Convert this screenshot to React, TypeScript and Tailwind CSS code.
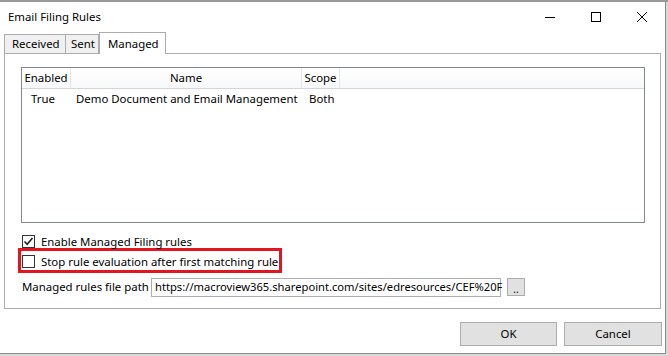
import React from "react";

const FONT = { fontFamily: '"Segoe UI", "Noto Sans", sans-serif' };

function CheckBox({ checked, label }: { checked?: boolean; label: string }) {
  return (
    <div className="flex items-center h-[13px]">
      <div className="shrink-0 w-[13px] h-[13px] border border-[#333333] bg-white flex items-center justify-center">
        {checked && (
          <svg width="11" height="11" viewBox="0 0 11 11">
            <path d="M1.5 5.5 L4.2 8.2 L9.5 2" fill="none" stroke="#222" strokeWidth="1.6" />
          </svg>
        )}
      </div>
      <span className="ml-[6px] leading-none whitespace-nowrap">{label}</span>
    </div>
  );
}

function WinButton({ children, w }: { children: React.ReactNode; w: string }) {
  return (
    <div
      className={`${w} h-[24px] bg-[#e1e1e1] border border-[#adadad] flex items-center justify-center`}
    >
      {children}
    </div>
  );
}

export default function App() {
  return (
    <div className="w-[668px] h-[356px] bg-[#d9d9d9] overflow-hidden text-[11.4px] text-black" style={FONT}>
      <div className="h-[2px] bg-[#9a9a9a]" />
      <div className="w-[666px] h-[352px] bg-white border-r border-b border-[#8a8a8a] flex flex-col">
        {/* title bar */}
        <div className="h-[30px] flex items-center">
          <span className="ml-[8px] flex-1">Email Filing Rules</span>
          <div className="w-[46px] h-[30px] flex items-center justify-center">
            <div className="w-[10px] h-px bg-black" />
          </div>
          <div className="w-[46px] h-[30px] flex items-center justify-center">
            <div className="w-[10px] h-[10px] border border-black" />
          </div>
          <div className="w-[46px] h-[30px] flex items-center justify-center">
            <svg width="10" height="10" viewBox="0 0 10 10">
              <path d="M0 0 L10 10 M10 0 L0 10" stroke="#000" strokeWidth="1" />
            </svg>
          </div>
        </div>

        {/* tabs */}
        <div className="flex items-end h-[21px] ml-[4px]">
          <div className="w-[62px] h-[19px] border border-b-0 border-[#acacac] bg-[#f0f0f0] flex items-center pl-[7px]">
            Received
          </div>
          <div className="w-[33px] h-[19px] border border-l-0 border-b-0 border-[#acacac] bg-[#f0f0f0] flex items-center pl-[5px]">
            Sent
          </div>
          <div className="w-[67px] h-[22px] border border-b-0 border-[#acacac] bg-white flex items-center pl-[8px] -mb-px relative">
            Managed
          </div>
        </div>

        {/* tab panel */}
        <div className="ml-[4px] w-[657px] h-[256px] border border-[#acacac] bg-white pl-[16px] pt-[13px]">
          {/* list view */}
          <div className="w-[624px] h-[156px] border border-[#828790] bg-white">
            <div className="h-[21px] flex border-b border-[#d5d5d5] bg-gradient-to-b from-white to-[#f7f8f9]">
              <div className="w-[49px] border-r border-[#e5e5e5] flex items-center justify-center">Enabled</div>
              <div className="w-[231px] border-r border-[#e5e5e5] flex items-center justify-center">Name</div>
              <div className="w-[38px] border-r border-[#e5e5e5] flex items-center justify-center">Scope</div>
              <div className="flex-1" />
            </div>
            <div className="h-[20px] flex items-center">
              <div className="w-[49px] pl-[9px]">True</div>
              <div className="w-[231px] pl-[5px] whitespace-nowrap">Demo Document and Email Management</div>
              <div className="w-[38px] pl-[7px]">Both</div>
            </div>
          </div>

          <div className="mt-[12px] ml-[1px]">
            <CheckBox checked label="Enable Managed Filing rules" />
          </div>

          <div className="-ml-[3px] w-[264px] h-[25px] border-[3px] border-[#e3161f] pl-[1px] pt-[4px]">
            <CheckBox label="Stop rule evaluation after first matching rule" />
          </div>

          <div className="mt-[5px] ml-[1px] flex items-center h-[18px]">
            <span className="shrink-0 w-[129px] whitespace-nowrap">Managed rules file path</span>
            <div className="shrink-0 w-[350px] h-[19px] border border-[#abadb3] flex items-center pl-[3px] text-[11.2px]">
              <span className="whitespace-nowrap">
                https://macroview365.sharepoint.com/sites/edresources/CEF%20F
              </span>
            </div>
            <div className="shrink-0 ml-[6px] w-[18px] h-[18px] bg-[#e1e1e1] border border-[#adadad] flex items-end justify-center text-[10px] leading-[12px]">
              ..
            </div>
          </div>
        </div>

        {/* footer */}
        <div className="flex justify-end gap-[7px] mt-[13px] pr-[3px]">
          <WinButton w="w-[97px]">OK</WinButton>
          <WinButton w="w-[98px]">Cancel</WinButton>
        </div>
      </div>
    </div>
  );
}
